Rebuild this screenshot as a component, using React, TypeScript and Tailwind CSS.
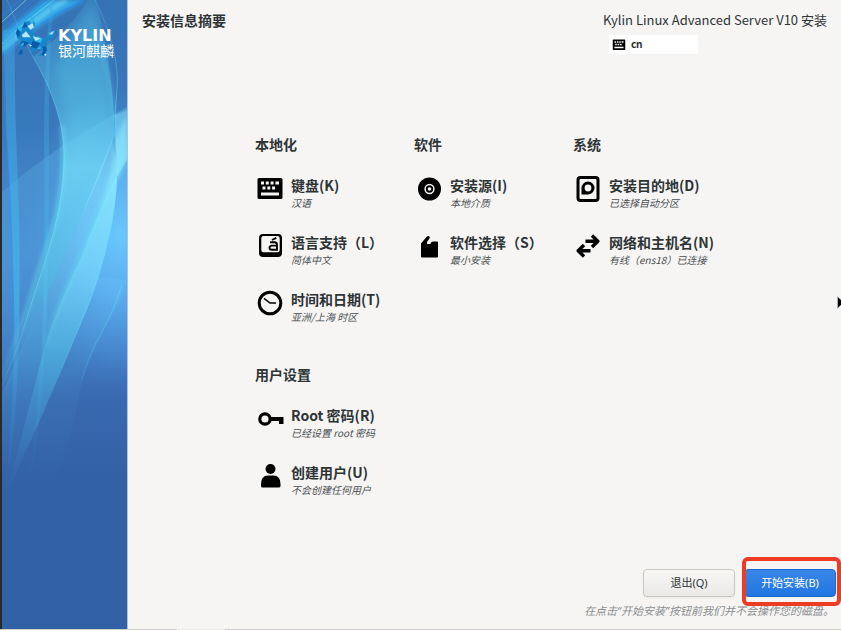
import type { ReactNode } from "react";

type Spoke = { title: string; status: string; icon: ReactNode };
type Category = { name: string; spokes: Spoke[] };

const KeyboardIcon = ({ className = "h-8 w-8" }: { className?: string }) => (
    <svg viewBox="0 0 32 32" className={className} aria-hidden="true">
        <path
            fillRule="evenodd"
            d="M5 5h22q1.500 0 1.500 1.500v18q0 1.500-1.500 1.500H5q-1.500 0-1.500-1.500v-18Q3.500 5 5 5zM7 8.500v3h3v-3zM11.800 8.500v3h3v-3zM16.600 8.500v3h3v-3zM21.400 8.500v3h3.600v-3zM8.500 13.500v3h3v-3zM13.300 13.500v3h3v-3zM18.100 13.500v3h3v-3zM7 19.500v3h18v-3z"
        />
    </svg>
);

const LanguageIcon = () => (
    <svg viewBox="0 0 32 32" className="h-8 w-8" aria-hidden="true">
        <path fillRule="evenodd" d="M9 4h15q4 0 4 4v15q0 4-4 4H9q-4 0-4-4V8q0-4 4-4zM9.500 6q-2.200 0-2.200 2.200V20q0 2.200 2.200 2.200H23.500q2.200 0 2.200-2.200V8.200q0-2.200-2.200-2.200z" />
        <path d="M16 12.300h4.500q2.500 0 2.500 2.500v5h-5q-2.500 0-2.500-2t2.500-2.200H23M18 10l4.300-2.200" fill="none" stroke="black" strokeWidth="1.900" />
    </svg>
);

const ClockIcon = () => (
    <svg viewBox="0 0 32 32" className="h-8 w-8" aria-hidden="true" fill="none" stroke="black">
        <circle cx="16" cy="16" r="10.800" strokeWidth="3" />
        <path d="M10 11.300l6 4.700h6" strokeWidth="1.500" />
    </svg>
);

const DiscIcon = () => (
    <svg viewBox="0 0 32 32" className="h-8 w-8" aria-hidden="true">
        <circle cx="16.500" cy="16" r="11.500" />
        <circle cx="16.500" cy="16" r="4.400" fill="none" stroke="#f6f5f4" strokeWidth="1.500" />
        <circle cx="16.500" cy="16" r="1.800" fill="#f6f5f4" />
    </svg>
);

const PackageIcon = () => (
    <svg viewBox="0 0 32 32" className="h-8 w-8" aria-hidden="true">
        <path d="M8 13.500L13.500 7q1.500-1.500 2.800-.6 1 .9 0 2.300L14 12v2h3.500q.2-2.500 2.500-2.500h4q1 0 1 1V26.500q0 1-1 1H9q-1 0-1-1z" />
    </svg>
);

const DestinationIcon = () => (
    <svg viewBox="0 0 32 32" className="h-8 w-8" aria-hidden="true">
        <rect x="6" y="4.500" width="20" height="23" rx="2.500" fill="none" stroke="black" strokeWidth="3" />
        <path fillRule="evenodd" d="M9.500 21.500V15a6.500 6.500 0 1 1 6.500 6.500zM16 11.600a3.400 3.400 0 1 0 0 6.800 3.400 3.400 0 0 0 0-6.800z" />
    </svg>
);

const NetworkIcon = () => (
    <svg viewBox="0 0 32 32" className="h-8 w-8" aria-hidden="true" fill="none" stroke="black" strokeWidth="3.400">
        <path d="M13.500 11.300h12M20 5.500l5.800 5.800-5.800 5.700M18.500 20.700H7M12 15l-5.800 5.700 5.800 5.800" strokeLinejoin="round" />
    </svg>
);

const KeyIcon = () => (
    <svg viewBox="0 0 32 32" className="h-8 w-8" aria-hidden="true">
        <circle cx="11" cy="16" r="5.200" fill="none" stroke="black" strokeWidth="3.200" />
        <path d="M16 14h13.500v7h-4.500v-3H16z" />
    </svg>
);

const UserIcon = () => (
    <svg viewBox="0 0 32 32" className="h-8 w-8" aria-hidden="true">
        <circle cx="16.500" cy="9" r="5" />
        <path d="M7 24q0-8.500 7-8.500h5.500q7 0 7 8.500v2q0 1.500-1.500 1.500H8.500Q7 27.500 7 26z" />
    </svg>
);

const columns: Category[][] = [
    [
        {
            name: "本地化",
            spokes: [
                { title: "键盘(K)", status: "汉语", icon: <KeyboardIcon /> },
                { title: "语言支持（L）", status: "简体中文", icon: <LanguageIcon /> },
                { title: "时间和日期(T)", status: "亚洲/上海 时区", icon: <ClockIcon /> },
            ],
        },
        {
            name: "用户设置",
            spokes: [
                { title: "Root 密码(R)", status: "已经设置 root 密码", icon: <KeyIcon /> },
                { title: "创建用户(U)", status: "不会创建任何用户", icon: <UserIcon /> },
            ],
        },
    ],
    [
        {
            name: "软件",
            spokes: [
                { title: "安装源(I)", status: "本地介质", icon: <DiscIcon /> },
                { title: "软件选择（S）", status: "最小安装", icon: <PackageIcon /> },
            ],
        },
    ],
    [
        {
            name: "系统",
            spokes: [
                { title: "安装目的地(D)", status: "已选择自动分区", icon: <DestinationIcon /> },
                { title: "网络和主机名(N)", status: "有线（ens18）已连接", icon: <NetworkIcon /> },
            ],
        },
    ],
];

function SidebarArt() {
    return (
        <svg viewBox="2 0 125 500" preserveAspectRatio="none" className="absolute inset-x-0 top-0 h-[500px] w-full" aria-hidden="true">
            <defs>
                <linearGradient id="base" x1="0" y1="0" x2="0" y2="1">
                    <stop offset="0" stopColor="#3572b4" />
                    <stop offset="0.250" stopColor="#3a78bc" />
                    <stop offset="0.500" stopColor="#4990d2" />
                    <stop offset="0.660" stopColor="#4584ca" />
                    <stop offset="0.800" stopColor="#3969b0" />
                    <stop offset="0.950" stopColor="#3361a5" />
                </linearGradient>
                <radialGradient id="glow" gradientUnits="userSpaceOnUse" cx="0" cy="0" r="1" gradientTransform="translate(120 235) scale(95 150)">
                    <stop offset="0" stopColor="#6cccff" />
                    <stop offset="0.400" stopColor="#62b8fb" stopOpacity="0.750" />
                    <stop offset="1" stopColor="#4a90dc" stopOpacity="0" />
                </radialGradient>
                <linearGradient id="veil" gradientUnits="userSpaceOnUse" x1="0" y1="105" x2="0" y2="380">
                    <stop offset="0" stopColor="#6fd0f4" stopOpacity="0.350" />
                    <stop offset="0.300" stopColor="#62c0ee" stopOpacity="0.200" />
                    <stop offset="1" stopColor="#4aa0dd" stopOpacity="0" />
                </linearGradient>
                <linearGradient id="sheet" gradientUnits="userSpaceOnUse" x1="0" y1="0" x2="0" y2="400">
                    <stop offset="0" stopColor="#48b8e4" stopOpacity="0.150" />
                    <stop offset="0.250" stopColor="#5accec" stopOpacity="0.450" />
                    <stop offset="0.420" stopColor="#72d8f6" stopOpacity="0.750" />
                    <stop offset="0.700" stopColor="#5ccdea" stopOpacity="0.550" />
                    <stop offset="1" stopColor="#4aa8dd" stopOpacity="0.050" />
                </linearGradient>
                <linearGradient id="front" gradientUnits="userSpaceOnUse" x1="0" y1="100" x2="0" y2="493">
                    <stop offset="0" stopColor="#7ae6fb" stopOpacity="0.300" />
                    <stop offset="0.200" stopColor="#8deaff" stopOpacity="0.750" />
                    <stop offset="0.450" stopColor="#76d4fa" stopOpacity="0.600" />
                    <stop offset="0.650" stopColor="#50b8e4" stopOpacity="0.550" />
                    <stop offset="1" stopColor="#3d90cc" stopOpacity="0" />
                </linearGradient>
                <linearGradient id="band" gradientUnits="userSpaceOnUse" x1="0" y1="0" x2="0" y2="500">
                    <stop offset="0" stopColor="#3ea2e4" stopOpacity="0.450" />
                    <stop offset="0.600" stopColor="#46c0ee" stopOpacity="0.550" />
                    <stop offset="1" stopColor="#2f80d8" stopOpacity="0" />
                </linearGradient>
                <linearGradient id="edge" gradientUnits="userSpaceOnUse" x1="0" y1="0" x2="0" y2="500">
                    <stop offset="0" stopColor="#55c6ee" stopOpacity="0.300" />
                    <stop offset="0.350" stopColor="#70eaf6" stopOpacity="0.600" />
                    <stop offset="0.600" stopColor="#62dfee" stopOpacity="0.550" />
                    <stop offset="0.850" stopColor="#4aa8dd" stopOpacity="0.100" />
                    <stop offset="1" stopColor="#4aa8dd" stopOpacity="0" />
                </linearGradient>
                <filter id="soft" x="-20%" y="-20%" width="140%" height="140%">
                    <feGaussianBlur stdDeviation="2" />
                </filter>
                <filter id="haze" x="-30%" y="-10%" width="160%" height="120%">
                    <feGaussianBlur stdDeviation="5" />
                </filter>
            </defs>
            <path fill="url(#base)" d="M2 0h125v500H2z" />
            <path fill="url(#glow)" d="M2 0h125v500H2z" />
            {/* horizon */}
            <path fill="url(#veil)" d="M2 192Q50 150 127 107V380H2z" />
            {/* soft light behind the sheets */}
            <path d="M92 0Q112 60 108 120L60 230 70 120 55 70z" fill="#52bce2" opacity="0.350" filter="url(#haze)" />
            {/* rays in the top left corner */}
            <g filter="url(#soft)">
                <path d="M2 34L44 0h42Q35 25 2 56z" fill="#2eb2ee" opacity="0.850" />
                <path d="M2 50Q34 18 66 0" fill="none" stroke="#6fdcfa" strokeWidth="3" />
            </g>
            <path d="M2 37Q24 15 46 0M2 29L34 0M2 16L20 0M2 55Q38 21 84 0" fill="none" stroke="#2484f0" strokeWidth="1" opacity="0.800" />
            <path d="M2 44Q24 22 54 0M2 22L26 0" fill="none" stroke="#6ee0fb" strokeWidth="1" opacity="0.700" />
            {/* vertical bands */}
            <path fill="url(#band)" d="M3 30H15Q14 90 17 160Q21 250 19 330Q17 430 5 493Q13 420 14 330Q13 240 7 140z" />
            <path d="M3 60Q4 110 7 140Q13 240 14 330" fill="none" stroke="#2f8df0" strokeWidth="1" opacity="0.600" />
            <path fill="url(#band)" opacity="0.700" d="M50 0H54Q48 60 49 140Q49 230 47 300Q44 420 28 493Q37 420 42 340Q46 240 44 140Q44 70 50 0z" />
            {/* curved sheets */}
            <path fill="url(#sheet)" d="M33 57Q64 110 64 155C64 215 44 262 34 295L18 345L2 385V400Q22 345 50 290L78 225L100 175L115 135Q113 70 96 0H88Q70 30 33 57z" />
            <path fill="url(#front)" d="M127 110V160Q111 185 100 210L80 260Q60 300 45 345L7 493L37 427L58 378L80 325Q98 285 108 240Q118 200 117 165L115 115z" />
            <path fill="url(#front)" opacity="0.600" d="M112 140L78 225L50 290Q22 345 2 395V493H7L37 427L58 378L80 325Q98 285 108 240Q118 200 117 165z" />
            <path fill="url(#front)" opacity="0.250" d="M127 280Q120 305 103 330L82 380Q72 440 50 495H7L58 378Q80 325 97 277z" />
            {/* sheet edges */}
            <g fill="none" stroke="url(#edge)">
                <path d="M7 0Q20 32 33 57Q64 110 64 155C64 215 44 262 34 295L18 345L2 385" strokeWidth="1" />
                <path d="M62 125Q66 165 58 208C50 245 38 268 28 307L2 378" strokeWidth="4" filter="url(#soft)" />
                <path d="M95 0Q120 50 117 90L115 115Q119 190 110 232Q100 280 80 325L58 378" strokeWidth="1" />
                <path d="M92 30Q112 75 115 120" strokeWidth="2" filter="url(#soft)" />
                <path d="M127 162Q111 185 100 210L80 260Q60 300 45 345" strokeWidth="3" filter="url(#soft)" />
                <path d="M122 285Q115 308 103 330Q88 355 82 380" strokeWidth="1" />
            </g>
            <path d="M115 140Q113 175 98 212Q113 188 127 155V115z" fill="#9cf4ff" opacity="0.450" filter="url(#soft)" />
        </svg>
    );
}

function KylinMark() {
    return (
        <svg viewBox="45 48 126 120" className="h-10 w-[42px] shrink-0" aria-hidden="true">
            <path
                fill="#1787cd"
                d="M97 50L103 64 105 78 98 88 100 98 112 108 128 116 142 112 150 102 145 98 165 91 161 108 150 120 140 125 136 135 141 150 132 167 116 167 126 156 122 148 110 146 104 158 90 152 100 142 88 134 80 128 72 140 64 148 68 162 54 164 62 150 60 136 66 122 54 116 48 100 52 86 66 82 74 66 88 62z"
            />
            <path fill="#0a5cab" d="M66 122L88 128 72 140 60 136zM98 122L120 130 110 146 90 140zM128 138L138 140 141 150 132 167 124 164 130 152zM52 86L62 96 54 116 48 100zM74 66L84 80 68 84zM62 150L66 148 68 162 54 164z" />
            <path fill="#36b6ea" d="M88 62L97 50 103 64 94 74zM112 108L128 116 122 128 104 122zM145 98L165 91 156 104 148 106zM52 86L66 82 64 96zM60 136L72 126 70 138zM110 146L122 138 122 148z" />
            <path fill="#b6e6ef" d="M82 78L98 70 102 82 92 90zM66 104L78 94 92 112 68 112zM98 108L122 116 106 122zM150 100L162 94 156 104zM84 132L96 136 92 140z" />
            <circle cx="136" cy="164" r="3" fill="#c8eef8" />
        </svg>
    );
}

function SpokeButton({ spoke }: { spoke: Spoke }) {
    return (
        <button type="button" className="flex items-start text-left">
            <span className="mr-[5px] block">{spoke.icon}</span>
            <span className="block pt-0.5 whitespace-nowrap">
                <span className="block text-sm leading-5 font-bold">{spoke.title}</span>
                <span className="block text-[10px] leading-4 text-[#4a4f51] italic">{spoke.status}</span>
            </span>
        </button>
    );
}

export default function App() {
    return (
        <div className="relative flex min-h-screen flex-col overflow-hidden bg-[#f6f5f4] font-['Noto_Sans_CJK_SC',sans-serif] text-[#2e3436]">
            <div className="flex grow">
                <aside className="relative w-[128px] shrink-0 border-r border-l-2 border-r-[#a9c3e2] border-l-[#2a2a2a] bg-[#3361a5]">
                    <SidebarArt />
                    <div className="relative flex items-start gap-px pt-4 pl-[13px]">
                        <KylinMark />
                        <div className="pt-3 whitespace-nowrap text-white">
                            <div className="font-['DejaVu_Sans',sans-serif] text-base leading-4 font-bold">KYLIN</div>
                            <div className="text-sm leading-3">银河麒麟</div>
                        </div>
                    </div>
                </aside>

                <main className="flex grow flex-col">
                    <header className="flex items-start justify-between pt-2.5 pr-3.5 pl-3.5">
                        <h1 className="text-sm leading-5 font-bold">安装信息摘要</h1>
                        <div className="min-w-[218px]">
                            <p className="text-[13px] leading-5">Kylin Linux Advanced Server V10 安装</p>
                            <button type="button" className="mt-[5px] ml-1.5 flex h-[19px] w-[89px] items-center gap-1 bg-white pl-0.5 font-['Noto_Sans',sans-serif] text-[10px] font-bold">
                                <KeyboardIcon className="h-4 w-4" />
                                cn
                            </button>
                        </div>
                    </header>

                    <div className="mt-20 flex grow justify-center pl-[18px]">
                        {columns.map((categories, i) => (
                            <div key={i} className="flex w-[159px] flex-col gap-[39px]">
                                {categories.map((category) => (
                                    <section key={category.name}>
                                        <h2 className="text-sm leading-5 font-bold">{category.name}</h2>
                                        <div className="-ml-px mt-[19px] flex flex-col items-start gap-[19px]">
                                            {category.spokes.map((spoke) => (
                                                <SpokeButton key={spoke.title} spoke={spoke} />
                                            ))}
                                        </div>
                                    </section>
                                ))}
                            </div>
                        ))}
                    </div>

                    <footer className="flex flex-col items-end pr-[5px] pb-2.5 font-['Noto_Sans','Noto_Sans_CJK_SC',sans-serif]">
                        <div className="flex gap-[9px] text-[11px]">
                            <button type="button" className="h-7 w-[92px] rounded border border-[#cdc7c2] bg-linear-to-b from-[#f8f7f6] to-[#ebe9e7] shadow-xs">
                                退出(Q)
                            </button>
                            <div className="relative">
                                <button type="button" className="h-7 w-[92px] rounded border border-[#1b6acb] bg-linear-to-b from-[#3986e6] to-[#1f76e2] text-white">
                                    开始安装(B)
                                </button>
                                <span className="pointer-events-none absolute -top-3 -right-[5px] -bottom-[9px] -left-0.5 rounded-md border-4 border-[#ee3b24]" />
                            </div>
                        </div>
                        <p className="mt-1.5 pr-0.5 text-[11px] leading-4 text-[#8b8e8f] italic">在点击“开始安装”按钮前我们并不会操作您的磁盘。</p>
                    </footer>
                </main>
            </div>
            <div className="flex h-px bg-[#cfcecb] pl-[177px]">
                <span className="w-12 bg-[#ecebe9]" />
            </div>

            {/* mouse pointer leaving the screen on the right */}
            <svg viewBox="0 0 4 14" className="absolute top-[296px] right-0 h-3.5 w-1" aria-hidden="true">
                <path d="M0.500 0.500L9 8.500H4.500L0.500 12.500z" fill="black" stroke="#d8d8d8" strokeWidth="0.500" />
            </svg>
        </div>
    );
}
